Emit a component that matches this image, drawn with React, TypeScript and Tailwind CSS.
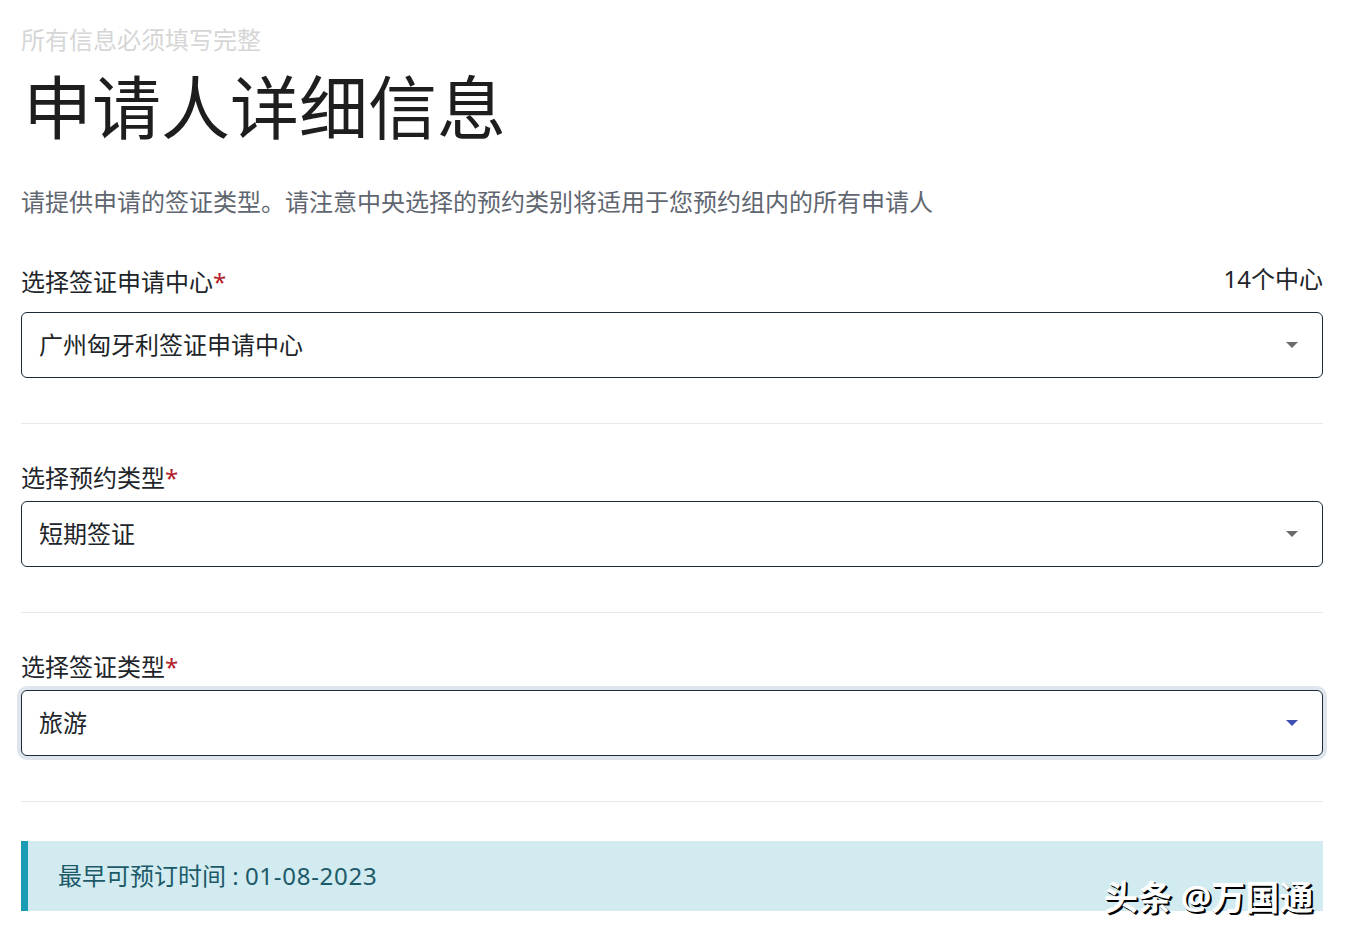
import React from "react";

const font = { fontFamily: '"Noto Sans", "Noto Sans CJK SC", sans-serif' };

function Caret({ color }: { color: string }) {
  return (
    <svg width="14" height="8" viewBox="0 0 14 8" className="shrink-0">
      <path d="M1 1 L13 1 L7 7 Z" fill={color} />
    </svg>
  );
}

function Select({ value, focused }: { value: string; focused?: boolean }) {
  return (
    <div
      className={
        "flex h-[66px] items-center justify-between rounded-[6px] border border-[#1c2a3a] bg-white pl-[17px] pr-[23px] " +
        (focused ? "shadow-[0_0_0_4px_#dfe5ec]" : "")
      }
    >
      <span className="text-[24px] leading-[36px] text-[#212529]">{value}</span>
      <Caret color={focused ? "#3f4fb0" : "#6b6b6b"} />
    </div>
  );
}

function Label({ text }: { text: string }) {
  return (
    <span className="text-[24px] leading-[36px] text-[#212529]">
      {text}
      <span className="text-[#b21f2d]">*</span>
    </span>
  );
}

export default function App() {
  return (
    <div className="relative min-h-[944px] bg-white pl-[21px] pr-[23px] pt-[22px]" style={font}>
      <div className="text-[24px] leading-[36px] text-[#d6d6d6]">所有信息必须填写完整</div>
      <h1 className="ml-[2px] mt-[11px] text-[69px] font-normal leading-[76px] text-[#1e1e1e]">申请人详细信息</h1>
      <p className="mt-[39px] text-[24px] leading-[36px] text-[#5f6670]">
        请提供申请的签证类型。请注意中央选择的预约类别将适用于您预约组内的所有申请人
      </p>

      <div className="mt-[41px] flex items-end justify-between">
        <Label text="选择签证申请中心" />
        <span className="mb-[3px] text-[24px] leading-[36px] text-[#212529]">14个中心</span>
      </div>
      <div className="mt-[12px]">
        <Select value="广州匈牙利签证申请中心" />
      </div>
      <hr className="mt-[45px] border-t border-[#e9e9e9]" />

      <div className="mt-[36px]">
        <Label text="选择预约类型" />
      </div>
      <div className="mt-[5px]">
        <Select value="短期签证" />
      </div>
      <hr className="mt-[45px] border-t border-[#e9e9e9]" />

      <div className="mt-[36px]">
        <Label text="选择签证类型" />
      </div>
      <div className="mt-[5px]">
        <Select value="旅游" focused />
      </div>
      <hr className="mt-[45px] border-t border-[#e9e9e9]" />

      <div className="mt-[39px] flex h-[70px] items-center border-l-[7px] border-[#1a9db3] bg-[#d1ebf1] pl-[30px]">
        <span className="text-[24px] leading-[36px] text-[#1d5a68]">
          最早可预订时间 : <span className="tracking-[0.03em]">01-08-2023</span>
        </span>
      </div>

      <div
        className="absolute left-[1104px] top-[877px] text-[34px] font-bold leading-[40px] text-white"
        style={{ textShadow: "2px 2px 0 #000, 1px 1px 0 #000" }}
      >
        头条 @万国通
      </div>
    </div>
  );
}
